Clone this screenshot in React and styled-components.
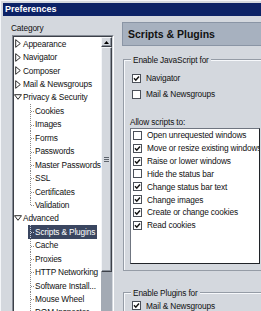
import React from "react";
import styled, { createGlobalStyle } from "styled-components";

const BG = "#d4d8de";

const Global = createGlobalStyle`
  html, body { margin: 0; padding: 0; background: ${BG}; }
  body { font-family: "Liberation Sans", Arial, sans-serif; }
`;

const Window = styled.div`
  width: 261px;
  height: 311px;
  overflow: hidden;
  box-sizing: border-box;
  padding: 3px 0 0 3px;
  background: ${BG};
  box-shadow: inset 1px 1px 0 #f4f6f9;
  display: flex;
  flex-direction: column;
  font-family: "Liberation Sans", Arial, sans-serif;
  font-size: 8.3px;
  letter-spacing: -0.15px;
  color: #111;
`;

const TitleBar = styled.div`
  flex: none;
  height: 13px;
  line-height: 13px;
  padding-left: 2px;
  background: #0c2266;
  color: #fff;
  font-weight: bold;
  font-size: 9px;
  letter-spacing: 0;
`;

const Body = styled.div`
  flex: 1;
  min-height: 0;
  display: flex;
`;

const LeftPane = styled.div`
  flex: none;
  width: 119px;
  box-sizing: border-box;
  padding: 6px 0 0 9px;
  display: flex;
  flex-direction: column;
`;

const Label = styled.div`
  line-height: 12px;
  height: 12px;
  margin: ${(p) => p.$m || "0"};
  white-space: nowrap;
`;

const Tree = styled.div`
  flex: none;
  width: 102px;
  height: 300px;
  box-sizing: border-box;
  border: 1px solid;
  border-color: #868c96 #fff #fff #868c96;
`;

const TreeInner = styled.div`
  height: 100%;
  box-sizing: border-box;
  border: 1px solid;
  border-color: #3c4048 ${BG} ${BG} #3c4048;
  display: flex;
`;

const TreeList = styled.div`
  flex: 1;
  min-width: 0;
  background: #fff;
  overflow: hidden;
  display: flex;
  flex-direction: column;
`;

const Row = styled.div`
  flex: none;
  height: 13.45px;
  display: flex;
  align-items: center;
  white-space: nowrap;
  padding-left: ${(p) => (p.$child ? 14 : 0)}px;
`;

const Twisty = styled.span`
  flex: none;
  width: 8px;
  height: 100%;
  margin-right: 1px;
  display: flex;
  align-items: center;
  justify-content: center;
`;

const Item = styled.span`
  display: flex;
  align-items: center;
  height: 100%;
  padding: 0 2px 0 2px;
  background: ${(p) => (p.$selected ? "#3a4660" : "transparent")};
  color: ${(p) => (p.$selected ? "#fff" : "inherit")};
`;

const Scrollbar = styled.div`
  flex: none;
  width: 11px;
  background: #a3aab4;
  display: flex;
  flex-direction: column;
`;

const ScrollPart = styled.div`
  flex: none;
  height: ${(p) => p.$h}px;
  box-sizing: border-box;
  background: ${BG};
  border: 1px solid;
  border-color: #f4f6f9 #3c4048 #3c4048 #f4f6f9;
  box-shadow: inset -1px -1px 0 #8a919b;
  display: flex;
  align-items: center;
  justify-content: center;
`;

const RightPane = styled.div`
  flex: none;
  width: 170px;
  box-sizing: border-box;
  padding-top: 6px;
  display: flex;
  flex-direction: column;
`;

const Header = styled.div`
  flex: none;
  height: 24px;
  box-sizing: border-box;
  border: 1px solid #8a95a5;
  background: #a7b1bf;
  padding-left: 5px;
  line-height: 22px;
  font-weight: bold;
  font-size: 10.5px;
  letter-spacing: 0;
  color: #111;
  white-space: nowrap;
`;

const Group = styled.div`
  flex: none;
  margin: ${(p) => p.$mt}px 0 0 1px;
  border: 1px solid #959ca6;
  box-shadow: inset 1px 1px 0 #f6f8fb;
  padding-bottom: ${(p) => p.$pb || 0}px;
  display: flex;
  flex-direction: column;
`;

const Caption = styled.div`
  align-self: flex-start;
  margin: -6.5px 0 0 7px;
  padding: 0 2px;
  line-height: 12px;
  background: ${BG};
  white-space: nowrap;
`;

const CheckRow = styled.div`
  flex: none;
  height: ${(p) => p.$h || 16}px;
  margin-top: ${(p) => p.$mt || 0}px;
  padding-left: ${(p) => p.$pl || 8}px;
  display: flex;
  align-items: center;
  gap: 5px;
  white-space: nowrap;
`;

const Box = styled.span`
  flex: none;
  width: 9px;
  height: 9px;
  box-sizing: border-box;
  border: 1px solid #4b5059;
  background: #fff;
  display: flex;
  align-items: center;
  justify-content: center;
`;

const ListBox = styled.div`
  flex: none;
  margin-left: 6px;
  width: 130px;
  height: 136px;
  box-sizing: border-box;
  border: 1px solid;
  border-color: #6f7580 #202328 #202328 #6f7580;
  background: #fff;
  overflow: hidden;
  display: flex;
  flex-direction: column;
`;

const ClosedTri = () => (
  <svg width="6" height="9" viewBox="0 0 6 9">
    <polygon points="0.7,0.7 5.3,4.5 0.7,8.3" fill="none" stroke="#2a2a2a" strokeWidth="1" />
  </svg>
);

const OpenTri = () => (
  <svg width="8" height="6" viewBox="0 0 8 6">
    <polygon points="0.5,0.7 7.5,0.7 4,5.3" fill="none" stroke="#2a2a2a" strokeWidth="1" />
  </svg>
);

const Connector = ({ last, light }) => {
  const c = light ? "#c9cfdb" : "#8a8a8a";
  return (
    <svg width="5" height="13.45" viewBox="0 0 5 13.45" style={{ flex: "none" }}>
      <line x1="0.5" y1="0" x2="0.5" y2={last ? 7 : 13.45} stroke={c} strokeDasharray="1 1" />
      <line x1="1" y1="7.5" x2="5" y2="7.5" stroke={c} strokeDasharray="1 1" />
    </svg>
  );
};

const Check = () => (
  <svg width="7" height="7" viewBox="0 0 7 7">
    <polyline points="1,3.3 2.8,5.2 6,1.6" fill="none" stroke="#151515" strokeWidth="1.5" />
  </svg>
);

const UpArrow = () => (
  <svg width="5" height="3" viewBox="0 0 5 3">
    <polygon points="2.5,0 5,3 0,3" fill="#000" />
  </svg>
);

const Grip = () => (
  <svg width="5" height="5" viewBox="0 0 5 5">
    <line x1="0" y1="0.5" x2="5" y2="0.5" stroke="#5d636c" />
    <line x1="0" y1="2.5" x2="5" y2="2.5" stroke="#5d636c" />
    <line x1="0" y1="4.5" x2="5" y2="4.5" stroke="#5d636c" />
  </svg>
);

const tree = [
  { label: "Appearance", t: "closed" },
  { label: "Navigator", t: "closed" },
  { label: "Composer", t: "closed" },
  { label: "Mail & Newsgroups", t: "closed" },
  { label: "Privacy & Security", t: "open" },
  { label: "Cookies" },
  { label: "Images" },
  { label: "Forms" },
  { label: "Passwords" },
  { label: "Master Passwords" },
  { label: "SSL" },
  { label: "Certificates" },
  { label: "Validation", last: true },
  { label: "Advanced", t: "open" },
  { label: "Scripts & Plugins", selected: true },
  { label: "Cache" },
  { label: "Proxies" },
  { label: "HTTP Networking" },
  { label: "Software Install..." },
  { label: "Mouse Wheel" },
  { label: "DOM Inspector" },
];

const scripts = [
  ["Open unrequested windows", false],
  ["Move or resize existing windows", true],
  ["Raise or lower windows", true],
  ["Hide the status bar", false],
  ["Change status bar text", true],
  ["Change images", true],
  ["Create or change cookies", true],
  ["Read cookies", true],
];

export default function App() {
  return (
    <>
      <Global />
      <Window>
        <TitleBar>Preferences</TitleBar>
        <Body>
          <LeftPane>
            <Label $m="0 0 1px -1px">Category</Label>
            <Tree>
              <TreeInner>
                <TreeList>
                  {tree.map((n) =>
                    n.t ? (
                      <Row key={n.label}>
                        <Twisty>{n.t === "open" ? <OpenTri /> : <ClosedTri />}</Twisty>
                        <span>{n.label}</span>
                      </Row>
                    ) : (
                      <Row key={n.label} $child>
                        <Item $selected={n.selected}>
                          <Connector last={n.last} light={n.selected} />
                          <span>{n.label}</span>
                        </Item>
                      </Row>
                    )
                  )}
                </TreeList>
                <Scrollbar>
                  <ScrollPart $h={10}>
                    <UpArrow />
                  </ScrollPart>
                  <ScrollPart $h={225}>
                    <Grip />
                  </ScrollPart>
                </Scrollbar>
              </TreeInner>
            </Tree>
          </LeftPane>
          <RightPane>
            <Header>Scripts &amp; Plugins</Header>
            <Group $mt={13} $pb={6}>
              <Caption>Enable JavaScript for</Caption>
              <CheckRow $mt={4.5}>
                <Box>
                  <Check />
                </Box>
                Navigator
              </CheckRow>
              <CheckRow>
                <Box />
                Mail &amp; Newsgroups
              </CheckRow>
              <Label $m="14px 0 0 6px">Allow scripts to:</Label>
              <ListBox>
                {scripts.map(([t, on]) => (
                  <CheckRow key={t} $h={12.85} $pl={2}>
                    <Box>{on && <Check />}</Box>
                    {t}
                  </CheckRow>
                ))}
              </ListBox>
            </Group>
            <Group $mt={21}>
              <Caption>Enable Plugins for</Caption>
              <CheckRow $mt={-1}>
                <Box>
                  <Check />
                </Box>
                Mail &amp; Newsgroups
              </CheckRow>
            </Group>
          </RightPane>
        </Body>
      </Window>
    </>
  );
}
